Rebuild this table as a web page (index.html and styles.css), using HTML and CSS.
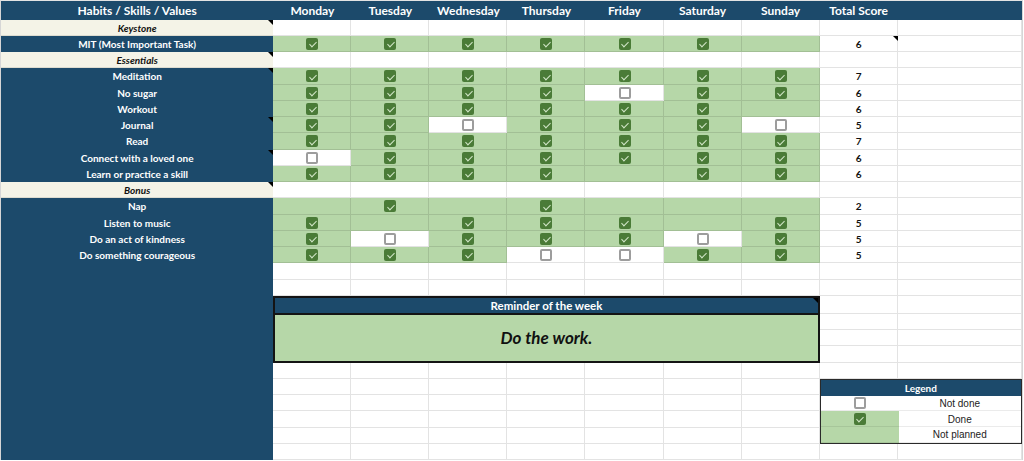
FILE: index.html
```html
<!DOCTYPE html>
<html lang="en">
<head>
<meta charset="utf-8">
<title>Weekly Habit Tracker</title>
<link rel="stylesheet" href="styles.css">
</head>
<body>
<div class="sheet">
  <!-- header -->
  <div class="h">Habits / Skills / Values</div>
  <div class="h">Monday</div>
  <div class="h">Tuesday</div>
  <div class="h">Wednesday</div>
  <div class="h">Thursday</div>
  <div class="h">Friday</div>
  <div class="h">Saturday</div>
  <div class="h">Sunday</div>
  <div class="h">Total Score</div>
  <div class="h"></div>

  <!-- Keystone -->
  <div class="sec note">Keystone</div>
  <div class="w"></div><div class="w"></div><div class="w"></div><div class="w"></div><div class="w"></div><div class="w"></div><div class="w"></div>
  <div class="w"></div><div class="w"></div>

  <div class="name">MIT (Most Important Task)</div>
  <div class="g"><span class="cb on"></span></div>
  <div class="g"><span class="cb on"></span></div>
  <div class="g"><span class="cb on"></span></div>
  <div class="g"><span class="cb on"></span></div>
  <div class="g"><span class="cb on"></span></div>
  <div class="g"><span class="cb on"></span></div>
  <div class="g"></div>
  <div class="t note">6</div><div class="w"></div>

  <!-- Essentials -->
  <div class="sec note">Essentials</div>
  <div class="w"></div><div class="w"></div><div class="w"></div><div class="w"></div><div class="w"></div><div class="w"></div><div class="w"></div>
  <div class="w"></div><div class="w"></div>

  <div class="name note">Meditation</div>
  <div class="g"><span class="cb on"></span></div>
  <div class="g"><span class="cb on"></span></div>
  <div class="g"><span class="cb on"></span></div>
  <div class="g"><span class="cb on"></span></div>
  <div class="g"><span class="cb on"></span></div>
  <div class="g"><span class="cb on"></span></div>
  <div class="g"><span class="cb on"></span></div>
  <div class="t">7</div><div class="w"></div>

  <div class="name">No sugar</div>
  <div class="g"><span class="cb on"></span></div>
  <div class="g"><span class="cb on"></span></div>
  <div class="g"><span class="cb on"></span></div>
  <div class="g"><span class="cb on"></span></div>
  <div class="w"><span class="cb"></span></div>
  <div class="g"><span class="cb on"></span></div>
  <div class="g"><span class="cb on"></span></div>
  <div class="t">6</div><div class="w"></div>

  <div class="name">Workout</div>
  <div class="g"><span class="cb on"></span></div>
  <div class="g"><span class="cb on"></span></div>
  <div class="g"><span class="cb on"></span></div>
  <div class="g"><span class="cb on"></span></div>
  <div class="g"><span class="cb on"></span></div>
  <div class="g"><span class="cb on"></span></div>
  <div class="g"></div>
  <div class="t">6</div><div class="w"></div>

  <div class="name note">Journal</div>
  <div class="g"><span class="cb on"></span></div>
  <div class="g"><span class="cb on"></span></div>
  <div class="w"><span class="cb"></span></div>
  <div class="g"><span class="cb on"></span></div>
  <div class="g"><span class="cb on"></span></div>
  <div class="g"><span class="cb on"></span></div>
  <div class="w"><span class="cb"></span></div>
  <div class="t">5</div><div class="w"></div>

  <div class="name">Read</div>
  <div class="g"><span class="cb on"></span></div>
  <div class="g"><span class="cb on"></span></div>
  <div class="g"><span class="cb on"></span></div>
  <div class="g"><span class="cb on"></span></div>
  <div class="g"><span class="cb on"></span></div>
  <div class="g"><span class="cb on"></span></div>
  <div class="g"><span class="cb on"></span></div>
  <div class="t">7</div><div class="w"></div>

  <div class="name note">Connect with a loved one</div>
  <div class="w"><span class="cb"></span></div>
  <div class="g"><span class="cb on"></span></div>
  <div class="g"><span class="cb on"></span></div>
  <div class="g"><span class="cb on"></span></div>
  <div class="g"><span class="cb on"></span></div>
  <div class="g"><span class="cb on"></span></div>
  <div class="g"><span class="cb on"></span></div>
  <div class="t">6</div><div class="w"></div>

  <div class="name">Learn or practice a skill</div>
  <div class="g"><span class="cb on"></span></div>
  <div class="g"><span class="cb on"></span></div>
  <div class="g"><span class="cb on"></span></div>
  <div class="g"><span class="cb on"></span></div>
  <div class="g"></div>
  <div class="g"><span class="cb on"></span></div>
  <div class="g"><span class="cb on"></span></div>
  <div class="t">6</div><div class="w"></div>

  <!-- Bonus -->
  <div class="sec note">Bonus</div>
  <div class="w"></div><div class="w"></div><div class="w"></div><div class="w"></div><div class="w"></div><div class="w"></div><div class="w"></div>
  <div class="w"></div><div class="w"></div>

  <div class="name">Nap</div>
  <div class="g"></div>
  <div class="g"><span class="cb on"></span></div>
  <div class="g"></div>
  <div class="g"><span class="cb on"></span></div>
  <div class="g"></div>
  <div class="g"></div>
  <div class="g"></div>
  <div class="t">2</div><div class="w"></div>

  <div class="name">Listen to music</div>
  <div class="g"><span class="cb on"></span></div>
  <div class="g"></div>
  <div class="g"><span class="cb on"></span></div>
  <div class="g"><span class="cb on"></span></div>
  <div class="g"><span class="cb on"></span></div>
  <div class="g"></div>
  <div class="g"><span class="cb on"></span></div>
  <div class="t">5</div><div class="w"></div>

  <div class="name">Do an act of kindness</div>
  <div class="g"><span class="cb on"></span></div>
  <div class="w"><span class="cb"></span></div>
  <div class="g"><span class="cb on"></span></div>
  <div class="g"><span class="cb on"></span></div>
  <div class="g"><span class="cb on"></span></div>
  <div class="w"><span class="cb"></span></div>
  <div class="g"><span class="cb on"></span></div>
  <div class="t">5</div><div class="w"></div>

  <div class="name">Do something courageous</div>
  <div class="g"><span class="cb on"></span></div>
  <div class="g"><span class="cb on"></span></div>
  <div class="g"><span class="cb on"></span></div>
  <div class="w"><span class="cb"></span></div>
  <div class="w"><span class="cb"></span></div>
  <div class="g"><span class="cb on"></span></div>
  <div class="g"><span class="cb on"></span></div>
  <div class="t">5</div><div class="w"></div>

  <!-- lower area -->
  <div class="side"></div>
  <div class="w"></div><div class="w"></div><div class="w"></div><div class="w"></div><div class="w"></div><div class="w"></div><div class="w"></div>
  <div class="w"></div><div class="w"></div>

  <div class="w"></div><div class="w"></div><div class="w"></div><div class="w"></div><div class="w"></div><div class="w"></div><div class="w"></div>
  <div class="w"></div><div class="w"></div>

  <div class="reminder">
    <div class="rem-head note">Reminder of the week</div>
    <div class="rem-body">Do the work.</div>
  </div>
  <div class="w"></div><div class="w"></div>
  <div class="w"></div><div class="w"></div>
  <div class="w"></div><div class="w"></div>
  <div class="w"></div><div class="w"></div>

  <div class="w"></div><div class="w"></div><div class="w"></div><div class="w"></div><div class="w"></div><div class="w"></div><div class="w"></div>
  <div class="w"></div><div class="w"></div>

  <div class="w"></div><div class="w"></div><div class="w"></div><div class="w"></div><div class="w"></div><div class="w"></div><div class="w"></div>
  <div class="legend">
    <div class="leg-head">Legend</div>
    <div class="leg-key"><span class="cb"></span></div>
    <div class="leg-label">Not done</div>
    <div class="leg-key green"><span class="cb on"></span></div>
    <div class="leg-label">Done</div>
    <div class="leg-key green"></div>
    <div class="leg-label">Not planned</div>
  </div>
  <div class="w"></div><div class="w"></div><div class="w"></div><div class="w"></div><div class="w"></div><div class="w"></div><div class="w"></div>
  <div class="w"></div><div class="w"></div><div class="w"></div><div class="w"></div><div class="w"></div><div class="w"></div><div class="w"></div>
  <div class="w"></div><div class="w"></div><div class="w"></div><div class="w"></div><div class="w"></div><div class="w"></div><div class="w"></div>

  <div class="w"></div><div class="w"></div><div class="w"></div><div class="w"></div><div class="w"></div><div class="w"></div><div class="w"></div>
  <div class="w"></div><div class="w"></div>
</div>
</body>
</html>
```

FILE: styles.css
```css
* {
  box-sizing: border-box;
  margin: 0;
  padding: 0;
}

html,
body {
  background: #ffffff;
}

body {
  font-family: Lato, "Open Sans", sans-serif;
  color: #111111;
}

.sheet {
  display: grid;
  grid-template-columns: 272.3px repeat(7, 78.06px) 78px 124.3px;
  grid-template-rows: 18.5px repeat(17, 16.25px) 18px repeat(9, 16.25px);
  width: fit-content;
  border-top: 1px solid #e3e3e3;
  border-left: 1px solid #d6d6d6;
  border-right: 1px solid #d6d6d6;
}

.h,
.name,
.sec,
.w,
.g,
.t {
  display: flex;
  align-items: center;
  justify-content: center;
  white-space: nowrap;
}

.h {
  background: #1c4a6b;
  color: #ffffff;
  font-weight: 700;
  font-size: 12px;
}

.name {
  background: #1c4a6b;
  color: #ffffff;
  font-weight: 700;
  font-size: 10px;
}

.sec {
  background: #f4f3e7;
  font-style: italic;
  font-weight: 700;
  font-size: 10px;
  color: #111111;
  box-shadow: inset 0 -1px 0 #dddcd0;
}

.w,
.g,
.t {
  box-shadow: inset -1px -1px 0 rgba(0, 0, 0, 0.11);
}

.g {
  background: #b6d7a8;
}

.t {
  font-weight: 700;
  font-size: 10px;
  color: #111111;
}

.side {
  grid-row: span 12;
  background: #1c4a6b;
}

/* checkboxes */
.cb {
  display: block;
  position: relative;
  width: 12px;
  height: 12px;
  border: 2px solid #9d9d9d;
  border-radius: 2px;
  background: #ffffff;
}

.cb.on {
  border: none;
  background: #4a7b37;
}

.cb.on::after {
  content: "";
  position: absolute;
  left: 4.2px;
  top: 2.2px;
  width: 3px;
  height: 6px;
  border: solid #d3e7c9;
  border-width: 0 1.4px 1.4px 0;
  transform: rotate(45deg);
}

/* comment marker */
.note {
  position: relative;
}

.note::before {
  content: "";
  position: absolute;
  top: 0;
  right: 0;
  border-left: 5px solid transparent;
  border-top: 5px solid #000000;
}

/* reminder box */
.reminder {
  grid-column: span 7;
  grid-row: span 4;
  display: flex;
  flex-direction: column;
  border: 2px solid #141414;
}

.rem-head {
  flex: 0 0 17px;
  display: flex;
  align-items: center;
  justify-content: center;
  background: #1c4a6b;
  color: #ffffff;
  font-weight: 700;
  font-size: 11.5px;
  border-bottom: 2px solid #141414;
}

.rem-body {
  flex: 1;
  display: flex;
  align-items: center;
  justify-content: center;
  background: #b6d7a8;
  color: #111111;
  font-size: 17px;
  font-weight: 700;
  font-style: italic;
}

/* legend */
.legend {
  grid-column: span 2;
  grid-row: span 4;
  display: grid;
  grid-template-columns: 78px 1fr;
  grid-template-rows: repeat(4, 1fr);
  border: 1px solid #2a2a2a;
}

.leg-head {
  grid-column: span 2;
  display: flex;
  align-items: center;
  justify-content: center;
  background: #1c4a6b;
  color: #ffffff;
  font-weight: 700;
  font-size: 10px;
}

.leg-key,
.leg-label {
  display: flex;
  align-items: center;
  justify-content: center;
  box-shadow: inset 0 -1px 0 rgba(0, 0, 0, 0.08);
}

.leg-key.green {
  background: #b6d7a8;
}

.leg-label {
  font-family: "Liberation Sans", Arial, sans-serif;
  font-size: 10px;
  color: #222222;
}
```
